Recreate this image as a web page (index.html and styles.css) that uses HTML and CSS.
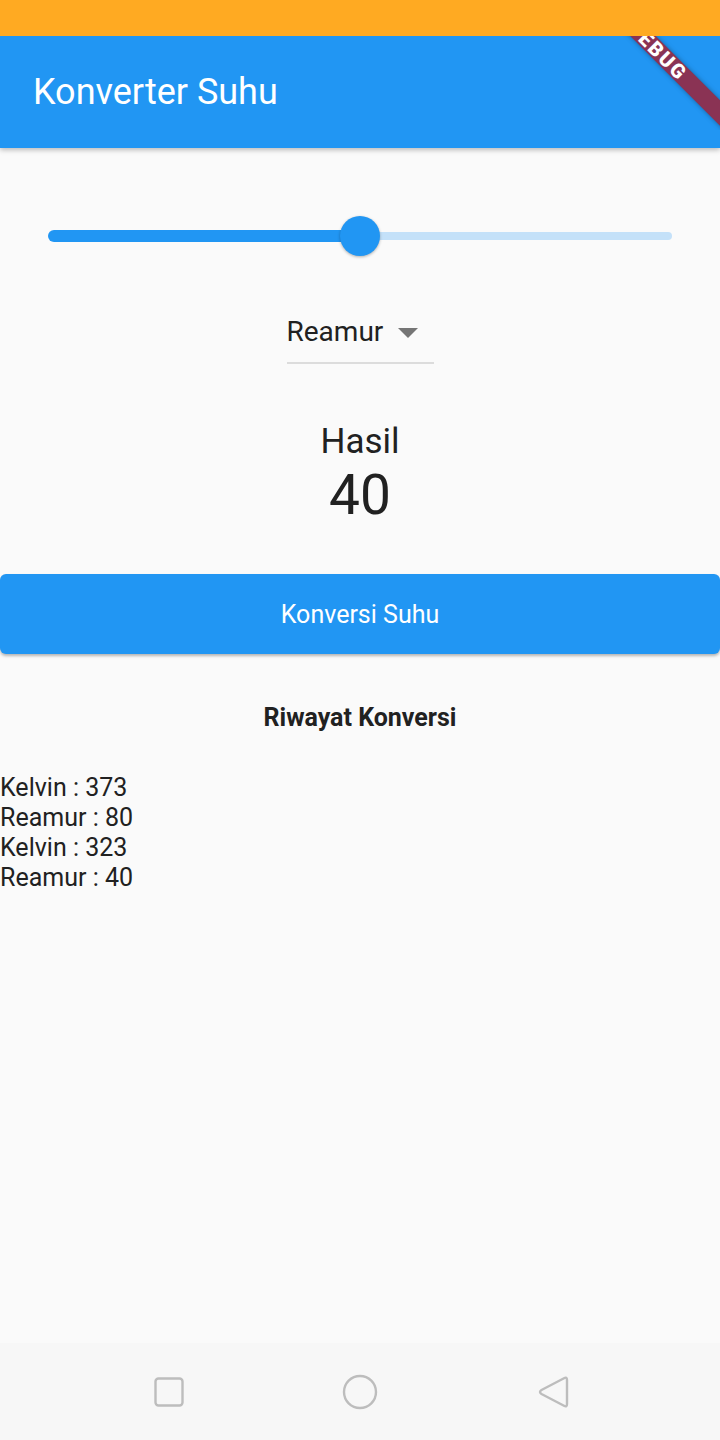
FILE: index.html
```html
<!DOCTYPE html>
<html lang="id">
<head>
<meta charset="utf-8">
<title>Konverter Suhu</title>
<link rel="stylesheet" href="styles.css">
</head>
<body>
  <div class="statusbar"></div>
  <header class="appbar">
    <h1 class="title">Konverter Suhu</h1>
  </header>
  <div class="banner-clip"><div class="banner">DEBUG</div></div>

  <main class="content">
    <div class="slider">
      <div class="track-active"></div>
      <div class="track-inactive"></div>
      <div class="thumb"></div>
    </div>

    <div class="dropdown">
      <span class="dropdown-value">Reamur</span>
      <svg class="dropdown-arrow" width="20" height="10" viewBox="0 0 20 10"><path d="M0 0 L20 0 L10 10 Z" fill="#757575"/></svg>
    </div>

    <div class="result">
      <div class="result-label">Hasil</div>
      <div class="result-value">40</div>
    </div>

    <button class="convert-btn">Konversi Suhu</button>

    <h2 class="history-title">Riwayat Konversi</h2>
    <ul class="history">
      <li>Kelvin : 373</li>
      <li>Reamur : 80</li>
      <li>Kelvin : 323</li>
      <li>Reamur : 40</li>
    </ul>
  </main>

  <nav class="navbar">
    <svg class="nav-icon nav-recent" width="40" height="40" viewBox="0 0 40 40"><rect x="6.5" y="6.5" width="27" height="27" rx="3" fill="none" stroke="#BDBDBD" stroke-width="2.4"/></svg>
    <svg class="nav-icon nav-home" width="40" height="40" viewBox="0 0 40 40"><circle cx="20" cy="20" r="16" fill="none" stroke="#BDBDBD" stroke-width="2.4"/></svg>
    <svg class="nav-icon nav-back" width="40" height="40" viewBox="0 0 40 40"><path d="M31 6.2 Q34 4.6 34 8 L34 32 Q34 35.4 31 33.8 L8.5 22 Q5.5 20 8.5 18 Z" fill="none" stroke="#BDBDBD" stroke-width="2.4" stroke-linejoin="round"/></svg>
  </nav>
</body>
</html>
```

FILE: styles.css
```css
* { box-sizing: border-box; }

html, body {
  margin: 0;
  padding: 0;
}

body {
  width: 720px;
  min-height: 1440px;
  background: #FAFAFA;
  font-family: Roboto, "Liberation Sans", sans-serif;
  color: #212121;
  display: flex;
  flex-direction: column;
  position: relative;
  overflow: hidden;
}

.statusbar {
  height: 36px;
  background: #FFAA22;
  position: relative;
  z-index: 3;
}

.appbar {
  height: 112px;
  background: #2196F3;
  display: flex;
  align-items: center;
  padding-left: 33px;
  box-shadow: 0 2px 5px rgba(0, 0, 0, 0.26);
  position: relative;
  z-index: 1;
}

.title {
  margin: 0;
  font-size: 36px;
  font-weight: 400;
  color: #FFFFFF;
}

.banner-clip {
  position: absolute;
  top: 0;
  right: 0;
  width: 130px;
  height: 130px;
  overflow: hidden;
  z-index: 2;
}

.banner {
  position: absolute;
  left: -48px;
  top: 46px;
  width: 240px;
  height: 18px;
  line-height: 18px;
  padding-right: 12px;
  background: #8A3354;
  color: #FFFFFF;
  font-size: 20px;
  font-weight: 900;
  text-align: center;
  letter-spacing: 2px;
  transform: rotate(45deg);
  box-shadow: 0 0 5px rgba(0, 0, 0, 0.35);
}

.content {
  flex: 1;
  display: flex;
  flex-direction: column;
  align-items: center;
}

.slider {
  margin-top: 68px;
  width: 624px;
  height: 40px;
  display: flex;
  align-items: center;
  position: relative;
}

.track-active {
  width: 312px;
  height: 12px;
  background: #2196F3;
  border-radius: 6px 0 0 6px;
}

.track-inactive {
  flex: 1;
  height: 8px;
  background: #C4E1F9;
  border-radius: 0 4px 4px 0;
}

.thumb {
  position: absolute;
  left: 292px;
  top: 0;
  width: 40px;
  height: 40px;
  border-radius: 50%;
  background: #2196F3;
  box-shadow: 0 1px 3px rgba(0, 0, 0, 0.3);
}

.dropdown {
  margin-top: 46px;
  width: 147px;
  height: 62px;
  border-bottom: 2px solid #DCDCDC;
  display: flex;
  align-items: center;
  gap: 15px;
}

.dropdown-value {
  font-size: 28px;
  line-height: 60px;
}

.dropdown-arrow {
  display: block;
  margin-top: 2px;
}

.result {
  margin-top: 57px;
  display: flex;
  flex-direction: column;
  align-items: center;
}

.result-label {
  font-size: 35px;
  line-height: 42px;
}

.result-value {
  font-size: 55px;
  line-height: 64px;
}

.convert-btn {
  margin-top: 47px;
  width: 720px;
  height: 80px;
  border: none;
  border-radius: 6px;
  background: #2196F3;
  color: #FFFFFF;
  font-family: Roboto, "Liberation Sans", sans-serif;
  font-size: 25px;
  box-shadow: 0 2px 3px rgba(0, 0, 0, 0.28);
  padding: 0;
}

.history-title {
  margin: 49px 0 0;
  font-size: 25px;
  line-height: 30px;
  font-weight: 700;
}

.history {
  list-style: none;
  margin: 40px 0 0;
  padding: 0;
  align-self: stretch;
}

.history li {
  font-size: 25px;
  line-height: 30px;
}

.navbar {
  height: 97px;
  background: #F7F7F7;
  display: flex;
  align-items: center;
  padding-left: 149px;
}

.nav-icon {
  display: block;
  flex: none;
}

.nav-home { margin-left: 151px; }
.nav-back { margin-left: 153px; }
```
